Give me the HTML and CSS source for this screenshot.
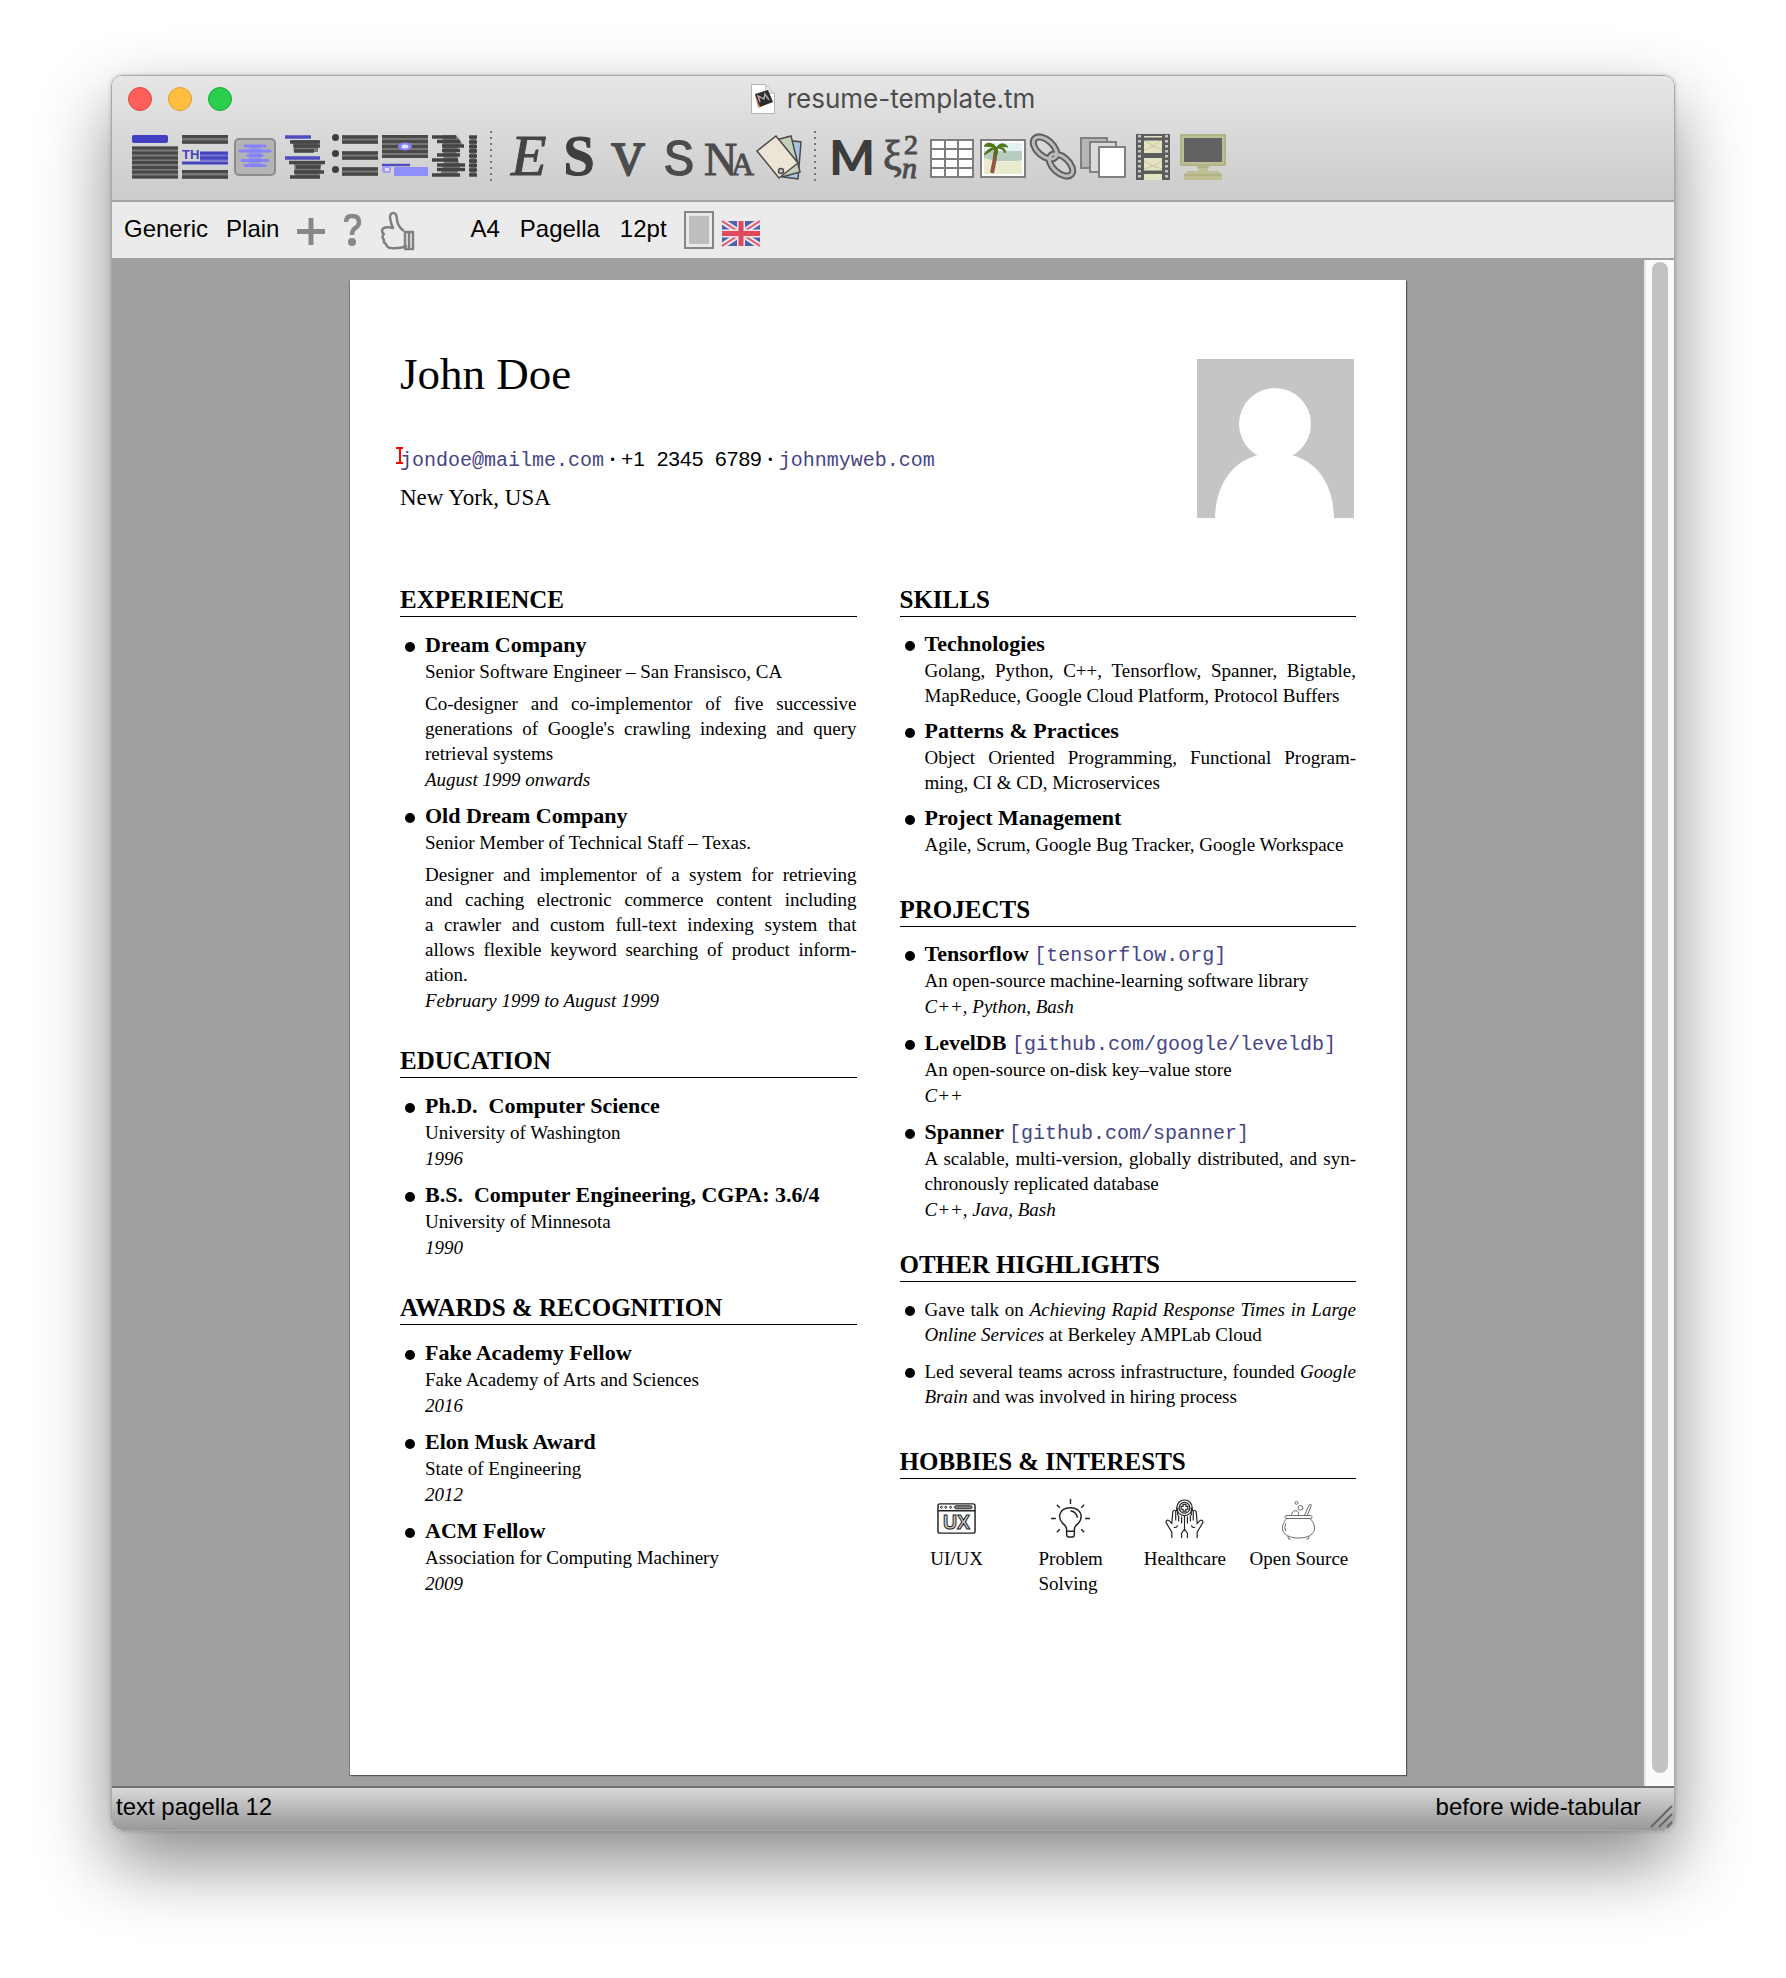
FILE: index.html
```html
<!DOCTYPE html>
<html lang="en">
<head>
<meta charset="utf-8">
<title>resume-template.tm</title>
<link rel="stylesheet" href="styles.css">
</head>
<body>
<div class="window">
  <header class="chrome">
    <div class="titlebar">
      <div class="lights">
        <button class="light close" aria-label="Close"></button>
        <button class="light minimise" aria-label="Minimise"></button>
        <button class="light maximise" aria-label="Zoom"></button>
      </div>
      <div class="doc-title">
        <svg width="24" height="30" viewBox="0 0 24 30"><path d="M.5.5h14l9 9v20H.5z" fill="#fff" stroke="#b5b5b5"/><path d="M14.500.5v9h9z" fill="#e4e4e4" stroke="#c4c4c4"/><path d="M4 11l3 12 2 1-3-13z" fill="#d9734a"/><path d="M4 10l13-4 5 12-13 5z" fill="#2c2c2e"/><path d="M9 18l-2-6 6 3 1-5 4 6" fill="none" stroke="#aaa" stroke-width="1.500"/></svg>
        <span>resume-template.tm</span>
      </div>
    </div>
    <div class="toolbar">
      <button aria-label="Title"><svg viewBox="0 0 46 46"><rect y="1" width="36" height="8" rx="2" fill="#4340c4"/><path d="M0 12.500h46v32H0z" fill="#7a7a7a"/><path d="M0 14h46M0 19h46M0 24h46M0 28.500h46M0 33.500h46M0 38h46M0 43h46" stroke="#484848" stroke-width="3"/></svg></button>
      <button aria-label="Theorem"><svg viewBox="0 0 46 46"><path d="M0 1h46v9H0zM0 36h46v9H0z" fill="#777"/><path d="M0 2.500h46M0 8h46M0 37.500h46M0 43h46" stroke="#484848" stroke-width="3"/><path d="M18 18h28v9H18z" fill="#7472d4"/><path d="M18 19h28M18 24h28M0 29h46" stroke="#4543bd" stroke-width="3"/><text x="0" y="25" font-size="13" font-weight="bold" fill="#4543bd" class="sans">TH</text></svg></button>
      <button aria-label="Section"><svg viewBox="0 0 46 46"><rect x="3" y="5" width="40" height="36" rx="4" fill="#b4b4b4" stroke="#8c8c8c" stroke-width="2"/><path d="M13 12h20M8 17h30M16 21.500h14M10 26.500h26M13 31.500h20" stroke="#8683fb" stroke-width="3" stroke-linecap="round"/><path d="M17 13h12v17H17z" fill="#8683fb" opacity=".6"/></svg></button>
      <button aria-label="Paragraph"><svg viewBox="0 0 46 46"><path d="M10 6h26v12H12zM12 28h28l-3 16H13z" fill="#777"/><path d="M3 3h26M3 24h35" stroke="#4f4dc0" stroke-width="3.500"/><path d="M8 8h30M12 12h26M12 17h20M7 28.500h36M14 33h24M12 38h30M8 43h30" stroke="#464646" stroke-width="3.500"/></svg></button>
      <button aria-label="List"><svg viewBox="0 0 46 46"><path d="M10 1h36v9H10zM10 17h36v9H10zM10 33h36v9H10z" fill="#777"/><path d="M10 3h36M10 8h36M10 19h36M10 24h36M10 35h36M10 40h36" stroke="#484848" stroke-width="3"/><circle cx="3.500" cy="3.500" r="3.500" fill="#3e3e3e"/><circle cx="3.500" cy="19.500" r="3.500" fill="#3e3e3e"/><circle cx="3.500" cy="35.500" r="3.500" fill="#3e3e3e"/></svg></button>
      <button aria-label="Footnote"><svg viewBox="0 0 46 46"><path d="M0 1h46v23H0z" fill="#787878"/><path d="M0 2.500h46M0 7.500h46M0 12.500h46M0 17.500h46M0 22.500h46" stroke="#4a4a4a" stroke-width="3"/><ellipse cx="23" cy="12.500" rx="7" ry="4" fill="#8683fb"/><ellipse cx="23" cy="12.500" rx="3.500" ry="2" fill="#e0e0ff"/><path d="M0 31h28" stroke="#4f4dc0" stroke-width="2.500"/><path d="M12 33h34v9H12z" fill="#908efc"/><rect y="32" width="9" height="7" rx="2" fill="#9f9dfc"/><rect x="3" y="34" width="4" height="3" fill="#e0e0ff"/></svg></button>
      <button aria-label="Page layout"><svg viewBox="0 0 46 46"><path d="M10 1h14l6 8-6 8 4 16-4 9H8l4-14z" fill="#787878"/><path d="M0 3h24M5 7.500h23M10 12h22M10 16.500h18M5 21h23M0 26h26M5 31h28M5 35.500h28M0 41h28" stroke="#444" stroke-width="3.500"/><path d="M38 2h6v40h-6z" fill="#787878"/><path d="M37 3h8M37 8h8M37 12.500h8M37 17h8M37 22h8M37 27h8M37 31.500h8M37 36h8M37 41h8" stroke="#444" stroke-width="3.500"/></svg></button>
      <span class="divider"></span>
      <button aria-label="Emphasis"><svg viewBox="0 0 46 46"><text x="5" y="41" font-size="58" class="serif slant" fill="#444" stroke="#444">E</text></svg></button>
      <button aria-label="Strong"><svg viewBox="0 0 46 46"><text x="23" y="41" font-size="56" class="serif mid" font-weight="bold" fill="#3f3f3f" stroke="#3f3f3f">S</text></svg></button>
      <button aria-label="Verbatim"><svg viewBox="0 0 46 46"><text x="22" y="41" font-size="46" class="serif mid" fill="#4c4c4c" stroke="#4c4c4c" stroke-width="2">V</text></svg></button>
      <button aria-label="Sans serif"><svg viewBox="0 0 46 46"><text x="23" y="41" font-size="52" class="mono mid" fill="#4c4c4c" stroke="#4c4c4c">S</text></svg></button>
      <button aria-label="Name"><svg viewBox="0 0 46 46" class="serif" fill="#4c4c4c" stroke="#4c4c4c"><text x="-2" y="41" font-size="46">N</text><text x="25" y="41" font-size="32">A</text></svg></button>
      <button aria-label="Style tags"><svg viewBox="0 0 46 46" stroke="#4a4a4a" stroke-width="1.500"><path d="M30 6l15 2-3 37-14-2z" fill="#a9c4e4"/><path d="M20 6l15-4 9 36-18 5z" fill="#c3d0b9"/><path d="M1 17L20 2l22 27-19 15z" fill="#ece5d6"/><circle cx="25" cy="37" r="2.500" fill="#ccc"/></svg></button>
      <span class="divider"></span>
      <button aria-label="Macro"><svg viewBox="0 0 46 46"><text x="22" y="41" font-size="48" class="black mid" fill="#3c3c3c">M</text></svg></button>
      <button aria-label="Mathematics"><svg viewBox="0 0 46 46" fill="#4c4c4c" stroke="#4c4c4c" class="serif"><text x="3" y="36" font-size="42">ξ</text><text x="24" y="20" font-size="28">2</text><text x="22" y="44" font-size="30" font-style="italic">n</text></svg></button>
      <button aria-label="Table"><svg viewBox="0 0 46 46"><path d="M1 6h42v37H1z" fill="#fff" stroke="#7e7e7e" stroke-width="2"/><path d="M1 15h42M1 25h42M1 34h42M15 6v37M28 6v37" stroke="#7e7e7e" stroke-width="2"/></svg></button>
      <button aria-label="Image"><svg viewBox="0 0 46 46"><path d="M1 6h44v37H1z" fill="#fff" stroke="#808080" stroke-width="2"/><path d="M4 9h38v10H4z" fill="#e3f0f2"/><path d="M4 17h38v10H4z" fill="#b8ccbf"/><path d="M4 24q18 6 38 2v14H4z" fill="#e8ebcd"/><path d="M16 15q-1 11-4 24" fill="none" stroke="#91583f" stroke-width="4"/><path d="M16 14Q9 5 4 12q6 0 12 2Q8 13 4 21q8-5 12-7-2 5-1 10 4-5 2-10 6 0 8 5 2-6-8-6 6-1 11 0-6-7-12 1-2-6-7-3 5 1 6 4" fill="#4d7619" stroke="#4d7619"/></svg></button>
      <button aria-label="Link"><svg viewBox="0 0 46 46" fill="none"><g stroke="#606060" stroke-width="7"><ellipse cx="15" cy="14" rx="14" ry="8" transform="rotate(42 15 14)"/><ellipse cx="31" cy="31" rx="14" ry="8" transform="rotate(42 31 31)"/></g><g stroke="#bcbcbc" stroke-width="3"><ellipse cx="15" cy="14" rx="14" ry="8" transform="rotate(42 15 14)"/><ellipse cx="31" cy="31" rx="14" ry="8" transform="rotate(42 31 31)"/></g></svg></button>
      <button aria-label="Fold"><svg viewBox="0 0 46 46" stroke="#808080" stroke-width="2"><path d="M1 4h26v30H1z" fill="#b5b5b5"/><path d="M10 8h26v30H10z" fill="#dadada"/><path d="M19 13h26v30H19z" fill="#fff"/></svg></button>
      <button aria-label="Animation"><svg viewBox="0 0 46 46"><path d="M6 0h34v46H6z" fill="#5c5c5c"/><path d="M14 2h18v17H14zM14 24h18v13H14zM14 40h18v6H14z" fill="#e3e3c4"/><path d="M14 6l9 6 9-6M14 16l9-4 9 4M14 27l9 5 9-5M14 35l9-3 9 3" fill="none" stroke="#c9c99b"/><path d="M9.500 1v45M36.500 1v45" stroke="#c4c4c4" stroke-width="3" stroke-dasharray="2.500 2.500"/><path d="M12 5h22M12 22h22M12 38h22" stroke="#5c5c5c" stroke-width="3"/></svg></button>
      <button aria-label="Presentation"><svg viewBox="0 0 46 46"><path d="M0 0h46v32H28v5h10l4 4v5H4v-5l4-4h10v-5H0z" fill="#bfbf95"/><path d="M1 1h44v30H1z" fill="none" stroke="#a5a578"/><path d="M4 4h38v24H4z" fill="#626262"/><path d="M4 41h38M17 33h12" stroke="#a5a578"/></svg></button>
    </div>
  </header>

  <nav class="context">
    <div class="group">
      <button>Generic</button>
      <button>Plain</button>
      <button aria-label="Add"><svg width="28" height="40" viewBox="0 0 28 40"><path d="M14 7v27M0 20.500h28" stroke="#888" stroke-width="5"/></svg></button>
      <button aria-label="Help"><svg width="19" height="40" viewBox="0 0 19 40"><path d="M3 11q0-6 6-6 7 0 7 6 0 4-5 7-2 2-2 6" fill="none" stroke="#888" stroke-width="4.500"/><circle cx="9" cy="31" r="4" fill="#888"/></svg></button>
      <button aria-label="Like"><svg width="34" height="40" viewBox="0 0 34 40" fill="none" stroke="#808080" stroke-width="2.500" stroke-linejoin="round"><path d="M25 21h8v17h-8zM29 22v15"/><path d="M24 20Q18 16 17 9q0-7-4-7-3 0-3 5 1 6 3 10-9-2-11 2 0 3 2 4-3 2 0 6-1 3 2 4 1 4 5 4 7 1 16-2"/></svg></button>
    </div>
    <div class="group wide">
      <button>A4</button>
      <button>Pagella</button>
      <button>12pt</button>
      <span class="pair">
        <button aria-label="Page colour"><svg width="30" height="38" viewBox="0 0 30 38"><path d="M1 1h28v36H1z" fill="#e9e9e9" stroke="#868686" stroke-width="2"/><path d="M5 5h20v28H5z" fill="#bebebe"/></svg></button>
        <button aria-label="British English"><svg width="38" height="25" viewBox="0 0 38 25"><path d="M0 0h38v25H0z" fill="#4c62a8"/><path d="M0 0l38 25M38 0L0 25" stroke="#f2e3ec" stroke-width="6"/><path d="M0 0l38 25M38 0L0 25" stroke="#e0566a" stroke-width="2"/><path d="M19 0v25M0 12.500h38" stroke="#f2e3ec" stroke-width="8"/><path d="M19 0v25M0 12.500h38" stroke="#e0485c" stroke-width="5"/></svg></button>
      </span>
    </div>
  </nav>

  <div class="workspace">
    <main class="canvas">
      <article class="page">
        <header class="intro">
          <div class="who">
            <h1>John Doe</h1>
            <p class="contact"><span class="caret"></span><a href="mailto:jondoe@mailme.com">jondoe@mailme.com</a><span class="dot">·</span><span class="phone">+1&nbsp; 2345&nbsp; 6789</span><span class="dot">·</span><a href="#johnmyweb">johnmyweb.com</a></p>
            <p class="place">New York, USA</p>
          </div>
          <svg class="photo" viewBox="0 0 157 159" role="img" aria-label="Portrait placeholder"><path d="M0 0h157v159H0z" fill="#c5c5c5"/><circle cx="78" cy="65" r="36" fill="#fff"/><path d="M18 159C19 118 43 94 78 94s58 24 59 65z" fill="#fff"/></svg>
        </header>

        <div class="columns">
          <div class="column">
            <section class="noted">
              <h2>EXPERIENCE</h2>
              <ul>
                <li><div><h3>Dream Company</h3>
                  <p>Senior Software Engineer – San Fransisco, CA</p>
                  <p class="story"><span class="full">Co-designer and co-implementor of five successive</span> <span class="full">generations of Google's crawling indexing and query</span> retrieval systems</p>
                  <p class="note">August 1999 onwards</p></div></li>
                <li><div><h3>Old Dream Company</h3>
                  <p>Senior Member of Technical Staff – Texas.</p>
                  <p class="story"><span class="full">Designer and implementor of a system for retrieving</span> <span class="full">and caching electronic commerce content including</span> <span class="full">a crawler and custom full-text indexing system that</span> <span class="full">allows flexible keyword searching of product inform-</span>ation.</p>
                  <p class="note">February 1999 to August 1999</p></div></li>
              </ul>
            </section>
            <section class="noted">
              <h2>EDUCATION</h2>
              <ul>
                <li><div><h3>Ph.D.&nbsp; Computer Science</h3><p>University of Washington</p><p class="note">1996</p></div></li>
                <li><div><h3>B.S.&nbsp; Computer Engineering, CGPA: 3.6/4</h3><p>University of Minnesota</p><p class="note">1990</p></div></li>
              </ul>
            </section>
            <section>
              <h2>AWARDS &amp; RECOGNITION</h2>
              <ul>
                <li><div><h3>Fake Academy Fellow</h3><p>Fake Academy of Arts and Sciences</p><p class="note">2016</p></div></li>
                <li><div><h3>Elon Musk Award</h3><p>State of Engineering</p><p class="note">2012</p></div></li>
                <li><div><h3>ACM Fellow</h3><p>Association for Computing Machinery</p><p class="note">2009</p></div></li>
              </ul>
            </section>
          </div>

          <div class="column compact">
            <section>
              <h2>SKILLS</h2>
              <ul>
                <li><div><h3>Technologies</h3><p><span class="full">Golang, Python, C++, Tensorflow, Spanner, Bigtable,</span> MapReduce, Google Cloud Platform, Protocol Buffers</p></div></li>
                <li><div><h3>Patterns &amp; Practices</h3><p><span class="full">Object Oriented Programming, Functional Program-</span>ming, CI &amp; CD, Microservices</p></div></li>
                <li><div><h3>Project Management</h3><p>Agile, Scrum, Google Bug Tracker, Google Workspace</p></div></li>
              </ul>
            </section>
            <section class="noted">
              <h2>PROJECTS</h2>
              <ul>
                <li><div><h3>Tensorflow <a href="#tensorflow">[tensorflow.org]</a></h3><p>An open-source machine-learning software library</p><p class="note">C++, Python, Bash</p></div></li>
                <li><div><h3>LevelDB <a href="#leveldb">[github.com/google/leveldb]</a></h3><p>An open-source on-disk key–value store</p><p class="note">C++</p></div></li>
                <li><div><h3>Spanner <a href="#spanner">[github.com/spanner]</a></h3><p><span class="full">A scalable, multi-version, globally distributed, and syn-</span>chronously replicated database</p><p class="note">C++, Java, Bash</p></div></li>
              </ul>
            </section>
            <section>
              <h2>OTHER HIGHLIGHTS</h2>
              <ul class="plain">
                <li><p><span class="full">Gave talk on <em>Achieving Rapid Response Times in Large</em></span> <em>Online Services</em> at Berkeley AMPLab Cloud</p></li>
                <li><p><span class="full">Led several teams across infrastructure, founded <em>Google</em></span> <em>Brain</em> and was involved in hiring process</p></li>
              </ul>
            </section>
            <section>
              <h2>HOBBIES &amp; INTERESTS</h2>
              <div class="hobbies">
                <figure><svg viewBox="0 0 40 40" fill="none" stroke="#222"><rect x="1" y="5" width="38" height="30" rx="2" stroke-width="1.500"/><path d="M1 12h38" stroke-width="1.500"/><circle cx="4.500" cy="8.500" r="1"/><circle cx="9" cy="8.500" r="1"/><circle cx="14" cy="8.500" r="1"/><rect x="18" y="7" width="18" height="3" rx="1.500" fill="#888"/><text x="20" y="31" font-size="20" font-weight="bold" class="sans mid" fill="#ccc">UX</text></svg><figcaption>UI/UX</figcaption></figure>
                <figure><svg viewBox="0 0 40 40" fill="none" stroke="#222" stroke-width="1.500"><path d="M16 34v-3q0-3-4-6-4-4-3-9 2-7 11-7t11 8q0 5-3 8-4 3-4 6v3M16 33h8v3q0 3-2 3h-4q-2 0-2-3zM20 12q6 1 7 7M20 0v5M0 20h5M35 20h5M6 6l3 3M34 6l-3 3M6 34l3-3M34 34l-3-3"/></svg><figcaption>Problem<br>Solving</figcaption></figure>
                <figure><svg viewBox="0 0 40 40" fill="none" stroke="#222" stroke-width="1.200"><circle cx="20" cy="9" r="8"/><circle cx="20" cy="9" r="5.500"/><path d="M18.500 5.500h3v2h2v3h-2v2h-3v-2h-2v-3h2zM7 40v-6L1 24q0-3 3-2l3 3 1-12q2-3 3 0l2-4v8M33 40v-6l6-10q0-3-3-2l-3 3-1-12q-2-3-3 0l-2-4v8M11 13v9M14 17v6M17 18v7M29 13v9M26 17v6M23 18v7M20 17v14M13 27q-1 3-4 2M27 27q1 3 4 2M17 40v-5l3-4 3 4v5"/></svg><figcaption>Healthcare</figcaption></figure>
                <figure><svg viewBox="0 0 40 40" fill="none" stroke="#666"><path d="M7 17h26q2 1 0 3H7q-2-1 0-3zM8 20C-2 32 6 40 20 40s22-8 12-20M7 25q-2 5 0 8M9 38l1 3h2M31 38l-1 3h-2M26 17l5-11q2-2 2 1l-4 10M13 17q0-5 4-5t3 5"/><circle cx="22" cy="9" r="2.500"/><circle cx="18" cy="4" r="1.500"/></svg><figcaption>Open Source</figcaption></figure>
              </div>
            </section>
          </div>
        </div>
      </article>
    </main>
    <div class="scrollbar"><div class="thumb"></div></div>
  </div>

  <footer class="status">
    <span>text pagella 12</span>
    <span>before wide-tabular</span>
    <svg class="grip" width="24" height="24" viewBox="0 0 24 24"><path d="M2 23L23 2M10 23L23 10M18 23l5-5" stroke="#666" stroke-width="2"/></svg>
  </footer>
</div>
</body>
</html>
```
FILE: styles.css
```css
* { box-sizing: border-box; }
body { margin: 0; padding: 75px 111px 148px; background: #fff; color: #000; font-family: "Liberation Sans", Arial, sans-serif; }
h1, h2, h3, p, ul, figure { margin: 0; padding: 0; }
button { border: 0; padding: 0; background: none; font: inherit; color: inherit; }
svg { display: block; overflow: visible; }

.window { border: 1px solid #a8a8a8; border-radius: 11px; overflow: hidden; box-shadow: 0 32px 72px rgba(0, 0, 0, .46), 0 0 4px rgba(0, 0, 0, .2); }

.chrome { height: 126px; background: linear-gradient(#e6e6e6, #cbcbcb); border-bottom: 2px solid #a5a5a5; }
.titlebar { display: grid; grid-template-columns: 1fr auto 1fr; align-items: center; height: 46px; padding: 0 16px; }
.lights { display: flex; gap: 16px; }
.light { width: 24px; height: 24px; border-radius: 50%; border: 1px solid; }
.close { background: #ff5f58; border-color: #e2463f; }
.minimise { background: #ffbe3f; border-color: #e0a02f; }
.maximise { background: #29ce4c; border-color: #1baa33; }
.doc-title { display: flex; align-items: center; gap: 12px; font: 26px "Inter", sans-serif; line-height: 30px; color: #4c4c4c; }

.toolbar { display: flex; padding: 9px 18px; }
.toolbar button { width: 50px; padding: 3px 2px; }
.toolbar svg { width: 46px; height: 46px; }
.divider { width: 2px; height: 50px; margin: 0 12px 0 10px; background: repeating-linear-gradient(#777 0 2px, transparent 2px 6px); }
.sans { font-family: "Liberation Sans", sans-serif; }
.serif { font-family: "Liberation Serif", serif; }
.mono { font-family: "Liberation Mono", monospace; }
.black { font-family: "Lato", sans-serif; font-weight: 900; }
.slant { font-style: italic; }
.mid { text-anchor: middle; }

.context { display: flex; gap: 56px; height: 56px; padding: 0 12px; background: #ebebeb; font-size: 24px; line-height: 54px; }
.group { display: flex; align-items: flex-start; gap: 18px; }
.group.wide { gap: 20px; }
.group svg { margin-top: 9px; }
.pair { display: flex; gap: 8px; margin-left: -3px; }
.pair button:last-child { padding-top: 6px; }

.workspace { display: flex; background: #a0a0a0; }
.canvas { flex: 1; padding: 22px 24px 11px; }
.page { width: 100%; max-width: 1056px; aspect-ratio: 1056 / 1495; margin: 0 auto; padding: 66px 50px 0; background: #fff; box-shadow: 1px 1px 1px #555, -1px 1px 0 #777; font-family: "Liberation Serif", "Times New Roman", serif; font-size: 19px; line-height: 25px; }
.scrollbar { display: flex; width: 30px; margin-top: 2px; padding: 2px 6px 13px; background: #fafafa; border-left: 2px solid #e8e8e8; }
.thumb { width: 16px; border-radius: 8px; background: #c2c2c2; }

.intro { display: flex; justify-content: space-between; }
h1 { font-size: 45px; line-height: 56px; font-weight: normal; }
.contact { display: flex; align-items: baseline; margin-top: 38px; font-size: 20px; line-height: 38px; }
.place { font-size: 23px; line-height: 36px; }
.phone { font-family: "Liberation Sans", sans-serif; font-size: 21px; }
.dot { width: 17px; text-align: center; font-weight: bold; }
.caret { position: absolute; width: 7px; height: 17px; margin: 7px 0 0 -4px; border: solid #f00; border-width: 2px 0; background: linear-gradient(#f00, #f00) center / 2px 100% no-repeat; }
.photo { width: 157px; height: 159px; margin: 13px 2px 0 0; }
.page a { color: #454585; text-decoration: none; font-family: "Liberation Mono", monospace; font-size: 20px; font-weight: normal; }

.columns { display: grid; grid-template-columns: 1fr 1fr; gap: 43px; margin-top: 65px; }
section { margin-bottom: 36px; }
.noted { margin-bottom: 30px; }
h2 { font-size: 25px; line-height: 33px; border-bottom: 1px solid #000; }
ul { display: grid; gap: 9px; padding-top: 14px; list-style: none; }
.compact ul { padding-top: 13px; }
.compact .noted { margin-bottom: 25px; }
li { display: grid; grid-template-columns: 25px 1fr; }
li::before { content: ""; width: 10px; height: 10px; margin: 11px 0 0 5px; border-radius: 50%; background: #000; }
h3 { font-size: 22px; line-height: 28px; }
h3 a { line-height: 1; }
.story { margin-top: 7px; }
.full { display: block; text-align: justify; text-align-last: justify; }
.note { font-style: italic; line-height: 27px; }
.compact .plain { gap: 12px; padding-top: 15px; }
.plain li::before { margin-top: 9px; }

.hobbies { display: grid; grid-template-columns: repeat(4, 1fr); padding-top: 20px; }
figure { display: flex; flex-direction: column; align-items: center; gap: 8px; }
figure svg { width: 39px; height: 39px; }
figcaption { white-space: nowrap; }

.status { display: flex; height: 44px; padding-left: 4px; border-top: 2px solid #707070; background: linear-gradient(#d8d8d8, #989898); font-size: 24px; line-height: 38px; }
.status span:first-child { flex: 1; }
.grip { align-self: flex-end; margin: 0 1px 2px 8px; }
```
